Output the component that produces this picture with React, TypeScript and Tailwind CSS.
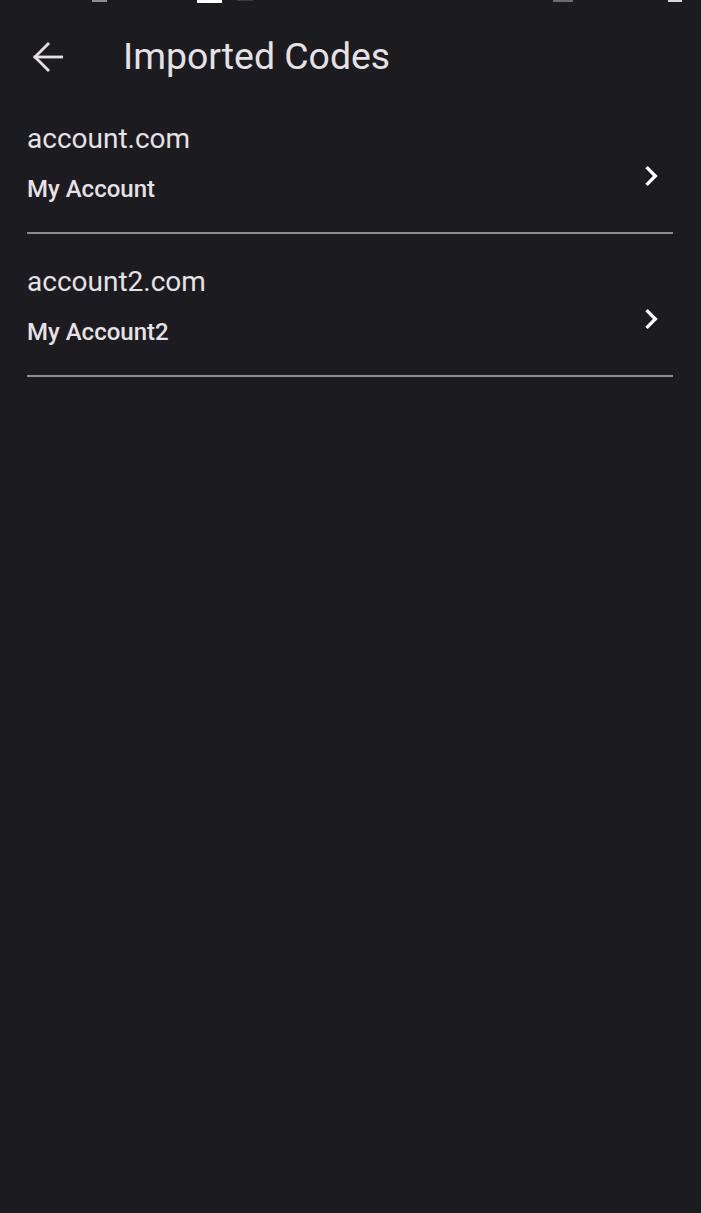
import React from "react";

const items = [
  { host: "account.com", name: "My Account" },
  { host: "account2.com", name: "My Account2" },
];

export default function App() {
  return (
    <div
      className="relative w-[701px] h-[1213px] bg-[#1c1b1f] overflow-hidden"
      style={{ fontFamily: "Roboto, 'Noto Sans', sans-serif" }}
    >
      <div className="absolute top-0 left-0 right-0 h-[3px]">
        <div className="absolute left-[92px] top-0 w-[15px] h-[2px] bg-[#8f8e91]" />
        <div className="absolute left-[197px] top-0 w-[25px] h-[3px] bg-white" />
        <div className="absolute left-[237px] top-0 w-[16px] h-[1px] bg-[#3a393c]" />
        <div className="absolute left-[553px] top-0 w-[20px] h-[2px] bg-[#6d6c6f]" />
        <div className="absolute left-[668px] top-0 w-[14px] h-[2px] bg-[#d8d8d8]" />
      </div>
      <div className="flex items-start h-[91px]">
        <div className="w-[123px] pl-[33px] pt-[42px] flex">
          <svg width="30" height="30" viewBox="0 0 30 30" fill="none" stroke="#e6e1e5" strokeWidth="2.8" strokeLinecap="square">
            <path d="M2 15H29" />
            <path d="M15 2 2 15 15 28" strokeLinejoin="miter" />
          </svg>
        </div>
        <div className="pt-[38px] text-[37.4px] text-[#e6e1e5] leading-none">Imported Codes</div>
      </div>
      <div className="pl-[27px] pr-[28px] flex flex-col">
        {items.map((it) => (
          <div key={it.host} className="flex items-start border-b-2 border-[#8b8a8e] h-[143px]">
            <div className="flex-1 flex flex-col pt-[32px]">
              <div className="text-[28px] leading-[32px] text-[#e6e1e5]">{it.host}</div>
              <div className="text-[24px] leading-[28px] font-medium text-[#e6e1e5] mt-[20px]">{it.name}</div>
            </div>
            <div className="pt-[65px] pr-[2px]">
              <svg width="40" height="40" viewBox="0 0 24 24" fill="#ffffff">
                <path d="M10 6 8.59 7.41 13.17 12l-4.58 4.59L10 18l6-6z" />
              </svg>
            </div>
          </div>
        ))}
      </div>
    </div>
  );
}
